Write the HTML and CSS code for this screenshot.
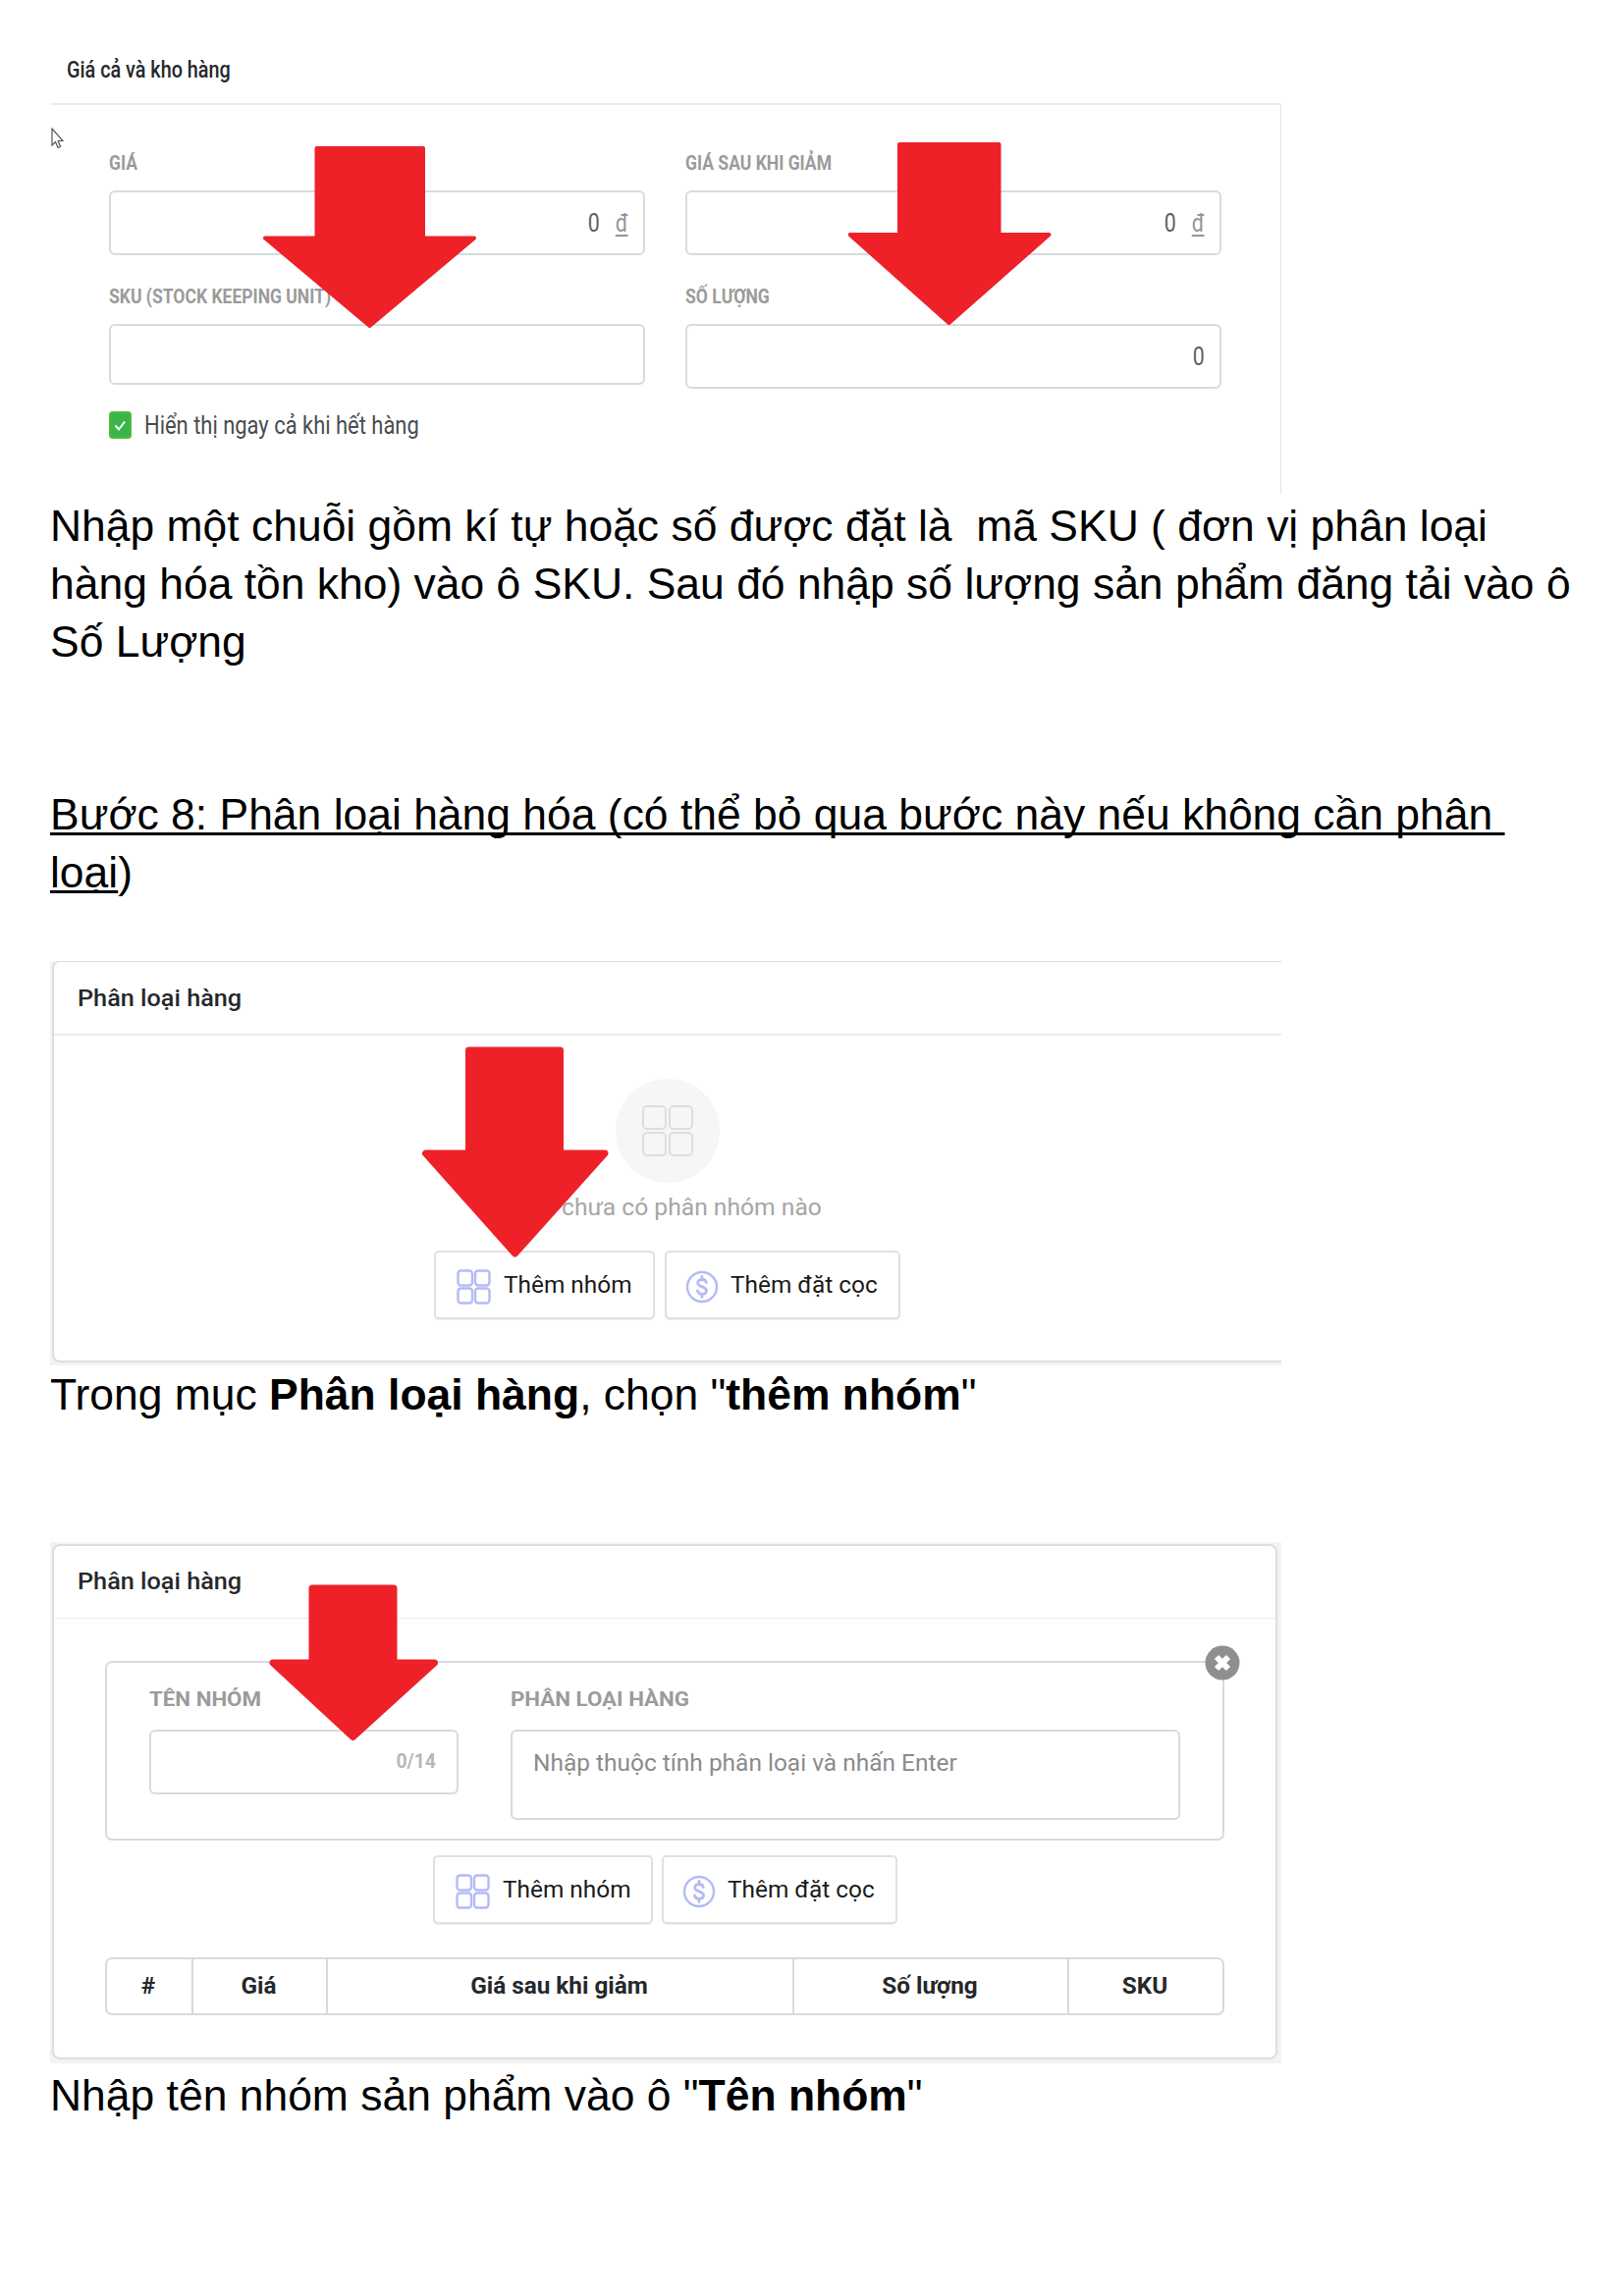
FILE: index.html
```html
<!DOCTYPE html>
<html lang="vi">
<head>
<meta charset="utf-8">
<title>Hướng dẫn đăng sản phẩm</title>
<link rel="stylesheet" href="styles.css">
</head>
<body>
<svg class="defs" width="0" height="0">
  <symbol id="grid" viewBox="0 0 36 36"><g fill="none" stroke="currentColor" stroke-width="2.400"><rect x="1.5" y="1.5" width="14.500" height="15" rx="3"/><rect x="19" y="1.5" width="14.500" height="15" rx="3"/><rect x="1.5" y="19.5" width="14.500" height="15" rx="3"/><rect x="19" y="19.5" width="14.500" height="15" rx="3"/></g></symbol>
  <symbol id="coin" viewBox="0 0 34 34"><g fill="none" stroke="currentColor" stroke-linecap="round"><circle cx="17" cy="17" r="15" stroke-width="2.400"/><path stroke-width="2.8" d="M21.3 12.6c-.4-2-2-3.1-4.3-3.1-2.500 0-4.300 1.300-4.300 3.400 0 4.900 8.800 3 8.800 7.800 0 2.200-1.900 3.600-4.500 3.600s-4.300-1.300-4.600-3.500M17 6.500v3M17 24.500v3"/></g></symbol>
</svg>

<figure class="shot pricing">
  <header class="head"><span class="t title1">Giá cả và kho hàng</span></header>
  <div class="fields">
    <div class="field"><span class="label"><span class="t sq">GIÁ</span></span><div class="input money"><span class="t num">0</span><span class="t dong">đ</span></div></div>
    <div class="field"><span class="label"><span class="t sq">GIÁ SAU KHI GIẢM</span></span><div class="input money"><span class="t num">0</span><span class="t dong">đ</span></div></div>
    <div class="field"><span class="label"><span class="t sq">SKU (STOCK KEEPING UNIT)</span></span><div class="input short"></div></div>
    <div class="field"><span class="label"><span class="t sq">SỐ LƯỢNG</span></span><div class="input"><span class="t num">0</span></div></div>
  </div>
  <div class="check"><svg class="box" width="23" height="28" viewBox="0 0 23 28"><rect x=".75" y=".75" width="21.500" height="26.500" rx="3" fill="#3bb54a" stroke="#58bd35" stroke-width="1.500"/><path d="M6.500 14.500l3.500 4 6-8" fill="none" stroke="#fff" stroke-width="2"/></svg><span class="t show">Hiển thị ngay cả khi hết hàng</span></div>
  <svg class="cursor" width="13" height="22" viewBox="0 0 13 22"><path d="M1 1v17l3.500-3.500 2.500 6 2.500-1-2.300-6H12z" fill="#fff" stroke="#555" stroke-width="1.200"/></svg>
  <svg class="arrow a1" width="218" height="186" viewBox="0 0 218 186"><path d="M54.500 2H163V93.500H215L108.500 183 2 93.500H54.500z"/></svg>
  <svg class="arrow a2" width="208" height="187" viewBox="0 0 208 187"><path d="M52 2H153.500V94H204.500L102.500 184 1.500 94H52z"/></svg>
</figure>

<p class="text">Nhập một chuỗi gồm kí tự hoặc số được đặt là&nbsp; mã SKU ( đơn vị phân loại<br>hàng hóa tồn kho) vào ô SKU. Sau đó nhập số lượng sản phẩm đăng tải vào ô<br>Số Lượng</p>
<h2 class="text step"><u>Bước 8: Phân loại hàng hóa (có thể bỏ qua bước này nếu không cần phân&nbsp;</u><br><u>loại</u>)</h2>

<figure class="shot card empty">
  <header class="head"><span class="t title2">Phân loại hàng</span></header>
  <div class="center">
    <div class="circle"><svg width="54" height="54" viewBox="0 0 54 54"><g fill="none" stroke="#dcdddf" stroke-width="2"><rect x="2" y="2" width="23" height="23" rx="4"/><rect x="29" y="2" width="23" height="23" rx="4"/><rect x="2" y="29" width="23" height="23" rx="4"/><rect x="29" y="29" width="23" height="23" rx="4"/></g></svg></div>
    <span class="t none">chưa có phân nhóm nào</span>
    <div class="buttons">
      <button class="btn b1"><svg class="ico" width="36" height="36"><use href="#grid"/></svg><span class="t">Thêm nhóm</span></button>
      <button class="btn b2"><svg class="ico" width="34" height="34"><use href="#coin"/></svg><span class="t">Thêm đặt cọc</span></button>
    </div>
  </div>
  <svg class="arrow round a3" width="192" height="218" viewBox="0 0 192 218"><path d="M47.500 5H140.500V110H186L94.500 212 3.500 110H47.500z"/></svg>
</figure>

<p class="text">Trong mục <b>Phân loại hàng</b>, chọn "<b>thêm nhóm</b>"</p>

<figure class="shot card group">
  <header class="head"><span class="t title2">Phân loại hàng</span></header>
  <div class="groupbox">
    <div class="name"><span class="label"><span class="t">TÊN NHÓM</span></span><div class="input"><span class="t count">0/14</span></div></div>
    <div class="attrs"><span class="label"><span class="t">PHÂN LOẠI HÀNG</span></span><div class="input area"><span class="t hint">Nhập thuộc tính phân loại và nhấn Enter</span></div></div>
    <svg class="close" width="36" height="36" viewBox="0 0 36 36"><circle cx="18" cy="18" r="17.500" fill="#8f8f8f"/><path d="M12 12l12 12M24 12L12 24" stroke="#fff" stroke-width="6"/></svg>
  </div>
  <div class="buttons">
    <button class="btn b1"><svg class="ico" width="36" height="36"><use href="#grid"/></svg><span class="t">Thêm nhóm</span></button>
    <button class="btn b2"><svg class="ico" width="34" height="34"><use href="#coin"/></svg><span class="t">Thêm đặt cọc</span></button>
  </div>
  <div class="table"><span>#</span><span>Giá</span><span>Giá sau khi giảm</span><span>Số lượng</span><span>SKU</span></div>
  <svg class="arrow round a4" width="174" height="162" viewBox="0 0 174 162"><path d="M44 4H127V80H168.500L85.500 155.500 4 80H44z"/></svg>
</figure>

<p class="text">Nhập tên nhóm sản phẩm vào ô "<b>Tên nhóm</b>"</p>
</body>
</html>
```
FILE: styles.css
```css
* { box-sizing: border-box; }
body { margin: 0; padding: 37px 0 0 51px; height: 2339px; background: #fff; color: #000; overflow: hidden; }
.defs { position: absolute; }
.text { margin: 0; font: 400 44.45px/59px "Liberation Sans", Arial, sans-serif; white-space: nowrap; }
.text u { text-decoration-thickness: 3px; text-underline-offset: 3px; text-decoration-skip-ink: none; }
.step { margin: 117px 0 61.5px; }

.shot { position: relative; margin: 0; width: 1254px; font-family: Roboto, "Noto Sans", sans-serif; font-size: 24px; color: #25282c; }
.t { display: inline-block; white-space: nowrap; transform-origin: left; }
.head { line-height: 40px; font-weight: 500; border-bottom: 2px solid #e9edf3; }
.label { display: block; font-weight: 700; color: #9b9b9b; }
.input { display: flex; align-items: center; justify-content: flex-end; border: 2px solid #d5dbdf; border-radius: 6px; background: #fff; }
.arrow { position: absolute; fill: #ee2129; stroke: #ee2129; stroke-width: 4; stroke-linejoin: round; }
.round { stroke-width: 7; }

.pricing { height: 468px; margin-bottom: 0.5px; }
.pricing .head { height: 70px; padding: 14px 0 0 17px; font-size: 24.4px; }
.pricing::after { content: ""; position: absolute; right: 0; top: 69px; bottom: 2px; border-right: 1px solid #dfe4ea; }
.title1 { transform: scaleX(.812); }
.fields { display: grid; grid-template-columns: 546px 546px; gap: 0 41px; padding: 47px 0 0 59.5px; }
.field { height: 136px; }
.pricing .label { font-size: 20px; line-height: 24px; margin-bottom: 16px; }
.sq { transform: scaleX(.876); }
.pricing .input { height: 66px; padding-right: 15px; font-size: 26px; color: #5c6166; }
.pricing .short { height: 62px; }
.num, .dong { transform: scaleX(.82); transform-origin: right; }
.dong { margin-left: 13px; color: #929599; text-decoration: underline; text-decoration-thickness: 2px; text-underline-offset: 3px; }
.check { display: flex; gap: 13px; padding-left: 59.5px; margin-top: -7px; height: 28px; line-height: 29px; font-size: 25.5px; color: #4a4d50; }
.show { transform: scaleX(.86); }
.cursor { position: absolute; left: 1px; top: 93px; }
.a1 { left: 217px; top: 112px; }
.a2 { left: 813px; top: 108px; }

.card::before { content: ""; position: absolute; inset: 0; z-index: -1; background: #f3f3f3; }
.card::after { content: ""; position: absolute; inset: 0 0 3px 2px; z-index: -1; background: #fff; border: 2px solid #dedede; border-width: 1px 0 2px 2px; border-radius: 8px 0 0 8px; }
.empty { height: 412px; }
.card .head { margin-left: 4px; padding-left: 24px; font-size: 24.4px; }
.title2 { transform: scaleX(1.035); }
.empty .head { height: 76px; padding-top: 18px; }
.center { display: flex; flex-direction: column; align-items: center; padding: 44px 0 0 3px; }
.circle { width: 106px; height: 106px; border-radius: 50%; background: #f4f6f8; display: grid; place-items: center; }
.none { align-self: flex-start; margin-left: 518px; line-height: 30px; margin-top: 10px; color: #a6a6a6; transform: scaleX(1.027); }
.buttons { display: flex; gap: 10px; }
.center .buttons { margin-top: 29px; }
.btn { display: flex; align-items: center; height: 70px; margin: 0; padding: 0 0 0 21px; border: 2px solid #e0e0e0; border-radius: 5px; background: #fff; box-shadow: 0 1px 1px #eee; font: 400 24.4px/30px Roboto, sans-serif; color: #1b1b1b; }
.btn .ico { color: #b3bbf6; flex: none; position: relative; top: 2px; }
.btn .t { margin-left: 12px; }
.b1 { width: 225px; }
.b2 { width: 240px; padding-left: 19px; }
.a3 { left: 379px; top: 86px; }

.group { height: 531px; margin-top: 120.5px; margin-bottom: 3px; }
.group::after { inset: 2px 4px 4px 2px; border-width: 2px; border-radius: 8px; }
.group .head { height: 78px; padding-top: 20px; margin-right: 6px; border-bottom-width: 1.500px; }
.groupbox { position: relative; display: flex; gap: 53px; width: 1140px; height: 183px; margin: 43px 0 0 56px; padding: 23.5px 0 0 43px; border: 2px solid #d5dbe0; border-radius: 7px; }
.group .label { font-size: 21px; line-height: 28px; margin-bottom: 17px; }
.group .label .t { transform: scaleX(1.062); }
.name { width: 315px; }
.attrs { width: 682px; }
.name .input { height: 66px; padding-right: 21px; padding-bottom: 1px; font-size: 19.4px; font-weight: 700; color: #b8b8b8; }
.area { height: 92px; align-items: flex-start; justify-content: flex-start; padding: 17px 0 0 21px; line-height: 30px; color: #8b8b8b; }
.hint { transform: scaleX(1.019); }
.close { position: absolute; right: -18px; top: -17.5px; }
.group .buttons { padding: 15.5px 0 0 390px; gap: 9px; }
.group .b1 { width: 224px; }
.table { display: grid; grid-template-columns: 86px 137px 475px 280px 1fr; width: 1140px; height: 59px; margin: 34px 0 0 56px; border: 2px solid #d5dbe0; border-radius: 7px; font-weight: 700; font-size: 24.3px; line-height: 54px; text-align: center; }
.table span { padding-right: 2px; }
.table span + span { border-left: 2px solid #d5dbe0; }
.a4 { left: 223px; top: 43px; }
```
